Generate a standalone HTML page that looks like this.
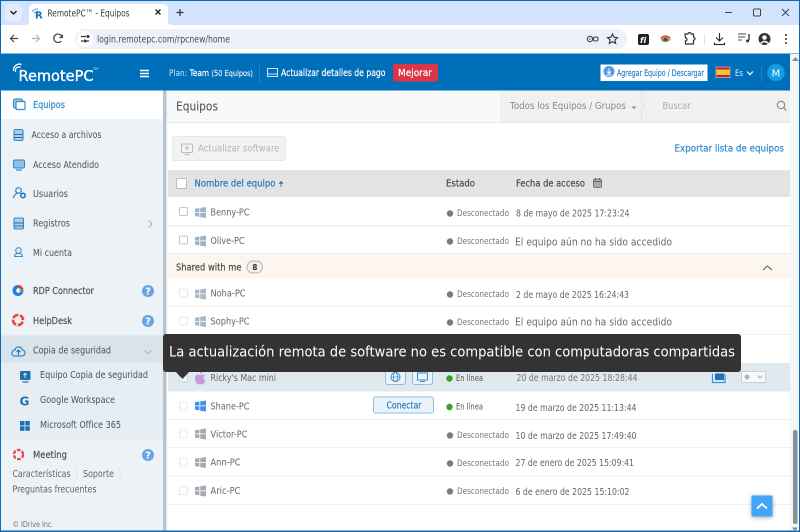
<!DOCTYPE html>
<html lang="es"><head><meta charset="utf-8"><title>RemotePC - Equipos</title>
<style>
html,body{margin:0;padding:0;width:800px;height:532px;overflow:hidden;background:#fff}
svg{display:block}
text{font-family:"DejaVu Sans","Liberation Sans",sans-serif;font-size:9px;fill:#555;white-space:pre}
.nav{font-size:10px;fill:#4b5159}
.navb{font-size:10px;fill:#4b5159;stroke:#4b5159;stroke-width:.2}
.cell{font-size:10px;fill:#666}
.st{font-size:8.5px;fill:#777}
.w{fill:#fff;stroke:#fff;stroke-width:.2}
.hd{font-size:10px;fill:#4a4a4a;stroke:#4a4a4a;stroke-width:.2}
.lnk{font-size:10px;fill:#1f78bd;stroke:#1f78bd;stroke-width:.2}
</style></head><body>
<svg width="800" height="532" viewBox="0 0 800 532" xmlns="http://www.w3.org/2000/svg">
<defs>
<g id="win"><path d="M0 1.600 4.400 1v4H0zM5.200.9 11 0v5H5.200zM0 5.800h4.400v4L0 9.200zM5.200 5.800H11V11l-5.800-.8z"/></g>
<g id="cb"><rect x=".5" y=".5" width="8" height="8" rx="1.500" fill="#fff" stroke="#c4c4c4"/></g>
<g id="cbl"><rect x=".5" y=".5" width="8" height="8" rx="1.500" fill="#fff" stroke="#e8e8e8"/></g>
<g id="q"><circle cx="6" cy="6" r="6" fill="#6aa5e3"/><text x="6" y="9.500" text-anchor="middle" style="font-size:10px;font-weight:700;fill:#fff">?</text></g>
<filter id="sh" x="-30%" y="-30%" width="160%" height="170%"><feDropShadow dx="0" dy="1" stdDeviation="2" flood-color="#000" flood-opacity=".35"/></filter>
</defs>

<!-- Chrome frame -->
<rect width="800" height="532" fill="#fff"/>
<rect x="0" y="0" width="800" height="25" fill="#d3e3fd"/>
<rect x="5" y="4" width="17" height="18" rx="5" fill="#e4ecfb"/>
<path d="M10.500 11l3 3 3-3" fill="none" stroke="#222" stroke-width="1.500"/>
<path d="M25 25q3 0 4-3V9q0-5 5-5h129q5 0 5 5v13q1 3 4 3z" fill="#fff"/>
<path d="M32 12a6 6 0 0 1 6-3M34.500 13.500a3 3 0 0 1 3-2" fill="none" stroke="#59b4e8" stroke-width="1.200"/>
<text x="35" y="18.500" style="font-size:10px;font-weight:700;fill:#1a6fb3">R</text>
<text x="47.500" y="16.500" textLength="82" lengthAdjust="spacingAndGlyphs" style="font-size:9.500px;fill:#3b3b3b">RemotePC™ - Equipos</text>
<path d="M155.500 9.500l5 5m0-5l-5 5" stroke="#222" stroke-width="1.300" fill="none"/>
<path d="M176.500 12.500h7m-3.500-3.500v7" stroke="#333" stroke-width="1.200" fill="none"/>
<path d="M725 12.500h7" stroke="#444" stroke-width="1"/>
<rect x="753.500" y="9" width="7" height="7" rx="1" fill="none" stroke="#444"/>
<path d="M782 9l7 7m0-7l-7 7" stroke="#444" stroke-width="1" fill="none"/>

<rect x="0" y="25" width="800" height="28" fill="#fff"/>
<path d="M18 38.500h-7m3-3.500-3.500 3.500 3.500 3.500" fill="none" stroke="#444" stroke-width="1.200"/>
<path d="M32 38.500h7m-3-3.500 3.500 3.500-3.500 3.500" fill="none" stroke="#b5b5b5" stroke-width="1.200"/>
<path d="M62 37a4.200 4.200 0 1 0-.8 4M62.300 34.500V37.500h-3" fill="none" stroke="#444" stroke-width="1.200"/>
<rect x="75" y="29" width="552" height="20" rx="10" fill="#edf2fa"/>
<circle cx="85" cy="39" r="8" fill="#fff"/>
<path d="M81 36.500h5M81 41h2M86 41h3" stroke="#333" stroke-width="1.200"/><circle cx="88" cy="36.500" r="1.500" fill="#333"/><circle cx="85" cy="41" r="1.500" fill="#333"/>
<text x="97" y="42.500" textLength="133" lengthAdjust="spacingAndGlyphs" style="font-size:10px;fill:#4a4a4a">login.remotepc.com/rpcnew/home</text>
<circle cx="590" cy="39" r="2.700" fill="none" stroke="#444" stroke-width="1.100"/><circle cx="590" cy="39" r=".8" fill="#444"/><rect x="593.500" y="37" width="4.500" height="4" rx="1.500" fill="none" stroke="#444" stroke-width="1.100"/>
<path d="M612.500 34l1.500 3.200 3.500.4-2.600 2.300.8 3.500-3.200-1.800-3.200 1.800.8-3.500-2.600-2.300 3.500-.4z" fill="none" stroke="#333" stroke-width="1.100"/>
<rect x="638" y="34" width="11" height="11" rx="2" fill="#222"/><text x="640" y="43" style="font-size:8px;font-style:italic;font-weight:700;fill:#fff">fi</text>
<ellipse cx="665.500" cy="39" rx="5" ry="3" fill="#e5a01f"/><path d="M661 38q4.500-4 9 0" fill="none" stroke="#d83a3a" stroke-width="1.300"/><ellipse cx="665.500" cy="40" rx="3" ry="1.800" fill="#2b8c56"/><circle cx="665.500" cy="39" r="1.500" fill="#3240b8"/>
<path d="M685 34h3a1.500 1.500 0 0 1 3 0h2.500v3.200a1.500 1.500 0 0 1 0 3v3.800H685.500v-3a1.500 1.500 0 0 0 0-3z" fill="none" stroke="#333" stroke-width="1.200"/>
<path d="M704.500 34v11" stroke="#d5e3f5"/>
<path d="M719.500 33v8m-3.500-3.500 3.500 3.500 3.500-3.500M714.500 42.500v2h10v-2" fill="none" stroke="#333" stroke-width="1.200"/>
<path d="M738 34h8M738 37h7M738 40h4" stroke="#444" stroke-width="1.100"/><path d="M749 34v6.500" stroke="#333" stroke-width="1.300"/><circle cx="747.500" cy="41" r="1.500" fill="#333"/>
<circle cx="764.500" cy="39" r="6" fill="#333"/><circle cx="764.500" cy="37.500" r="2.300" fill="#fff"/><path d="M760.500 43.500q4-4 8 0" fill="none" stroke="#fff" stroke-width="1.300"/>
<circle cx="786" cy="35" r="1" fill="#333"/><circle cx="786" cy="39" r="1" fill="#333"/><circle cx="786" cy="43" r="1" fill="#333"/>
<rect x="0" y="53" width="800" height="1" fill="#7fb3dc"/>

<!-- App header -->
<rect x="0" y="54" width="790" height="36.500" fill="#006fba"/>
<path d="M13.500 71a6 6 0 0 1 8-6.500M15.700 72a3.500 3.500 0 0 1 5-4.500" fill="none" stroke="#fff" stroke-width="1.300"/>
<text x="18.500" y="81" textLength="75" lengthAdjust="spacingAndGlyphs" style="font-size:15.500px;fill:#fff;stroke:#fff;stroke-width:.35">RemotePC</text>
<text x="93" y="70" style="font-size:3.500px;fill:#cfe4f5">TM</text>
<path d="M140 70.500h9M140 73.500h9M140 76.500h9" stroke="#fff" stroke-width="1.500"/>
<text x="169" y="76" textLength="84" lengthAdjust="spacingAndGlyphs" style="font-size:9px;fill:#fff"><tspan fill="#d4e6f6">Plan:</tspan> <tspan stroke="#fff" stroke-width=".2">Team</tspan> <tspan font-size="8" fill="#e8f2fb" stroke="#e8f2fb" stroke-width=".15">(50 Equipos)</tspan></text>
<path d="M259.500 63v21" stroke="#1c82c9"/>
<rect x="267.500" y="68.500" width="10" height="8" fill="none" stroke="#d4e6f6"/><path d="M268 74h9" stroke="#d4e6f6" stroke-width="1"/>
<text class="w" x="281" y="76" textLength="104.500" lengthAdjust="spacingAndGlyphs" style="font-size:9.500px">Actualizar detalles de pago</text>
<rect x="393" y="64" width="45" height="17.500" rx="1.500" fill="#dc3545"/>
<text class="w" x="398" y="76" textLength="34" lengthAdjust="spacingAndGlyphs" style="font-size:9.500px">Mejorar</text>
<rect x="600.500" y="64.500" width="107" height="16.500" fill="#fff"/>
<circle cx="609" cy="71.500" r="5.500" fill="#4a9be8"/><path d="M609 68.500v5m-2-2 2 2 2-2M606.500 75h5" fill="none" stroke="#fff" stroke-width="1"/>
<text x="617" y="76" textLength="87" lengthAdjust="spacingAndGlyphs" style="font-size:9px;fill:#1f7cc7;stroke:#1f7cc7;stroke-width:.15">Agregar Equipo / Descargar</text>
<rect x="716" y="67" width="14" height="10.500" fill="#c8202c" stroke="#e8ced0" stroke-width=".6"/><rect x="716.500" y="69.500" width="13" height="5.500" fill="#f4c430"/>
<text x="735" y="76" textLength="8" lengthAdjust="spacingAndGlyphs" style="font-size:9px;fill:#e3effa">Es</text>
<path d="M747 71.500l3 3 3-3" fill="none" stroke="#fff" stroke-width="1.200"/>
<path d="M761.500 65v17" stroke="#1c82c9"/>
<circle cx="776" cy="72.500" r="8.700" fill="#159ce0"/>
<text x="776" y="76.500" text-anchor="middle" style="font-size:10px;fill:#fff">M</text>

<!-- Sidebar -->
<rect x="0" y="90.500" width="163" height="441" fill="#edf2f7"/>
<rect x="1" y="90.500" width="162" height="28.500" fill="#fff"/>
<rect x="163" y="90.500" width="3.500" height="441" fill="#b9c3cb"/>
<rect x="13.500" y="99" width="9" height="9" rx="2" fill="#a7d0ee" stroke="#2f8dd0" stroke-width="1.200"/><rect x="16" y="101.500" width="9" height="8" rx="1" fill="#fff" stroke="#2f8dd0" stroke-width="1.200"/>
<text x="33" y="108" textLength="32" lengthAdjust="spacingAndGlyphs" style="font-size:10px;fill:#2e8ccc;stroke:#2e8ccc;stroke-width:.2">Equipos</text>

<rect x="14" y="129.500" width="9" height="11" rx="1.500" fill="#a9cdea" stroke="#2d87c9"/><path d="M14 134.500h9.500M14 137.500h9.500" stroke="#2d6fa8"/>
<text class="nav" x="31.500" y="138" textLength="70" lengthAdjust="spacingAndGlyphs">Acceso a archivos</text>
<rect x="13.500" y="160" width="11" height="8" rx="1.500" fill="#8ec0e6" stroke="#2d87c9"/><path d="M16 170h6" stroke="#2d87c9" stroke-width="1.200"/>
<text class="nav" x="33" y="168" textLength="66" lengthAdjust="spacingAndGlyphs">Acceso Atendido</text>
<circle cx="18.500" cy="190.500" r="2.800" fill="none" stroke="#2d87c9" stroke-width="1.200"/><path d="M13.500 198q1-5 5-5" fill="none" stroke="#2d87c9" stroke-width="1.200"/><circle cx="23" cy="195.500" r="2.200" fill="none" stroke="#1d70b0" stroke-width="1.500"/>
<text class="nav" x="33" y="197" textLength="35" lengthAdjust="spacingAndGlyphs">Usuarios</text>
<rect x="14" y="218" width="9.500" height="11" rx="1.500" fill="#a9cdea" stroke="#2d87c9"/><path d="M14 223h9.500M14 226h9.500" stroke="#2d6fa8"/>
<text class="nav" x="33" y="226.500" textLength="37" lengthAdjust="spacingAndGlyphs">Registros</text>
<path d="M149 220.500l3 3.500-3 3.500" fill="none" stroke="#a8adb2"/>
<circle cx="18.500" cy="250.500" r="2.800" fill="none" stroke="#3d8fd0" stroke-width="1.100"/><path d="M14.500 256.500q0-3 4-3t4 3z" fill="none" stroke="#3d8fd0" stroke-width="1.100"/>
<text class="nav" x="33" y="256" textLength="39" lengthAdjust="spacingAndGlyphs">Mi cuenta</text>

<circle cx="18" cy="290.500" r="5.500" fill="#1d7fe0"/><path d="M18 285a5.500 5.500 0 0 1 5 3l-3 1a2 2 0 0 0-2-1z" fill="#e6453a"/><circle cx="18.500" cy="290.500" r="2.300" fill="#fff"/><path d="M19 290.500h3.500v2" fill="none" stroke="#e67c28" stroke-width="1.200"/>
<text class="navb" x="33" y="294" textLength="61" lengthAdjust="spacingAndGlyphs">RDP Connector</text>
<use href="#q" x="142" y="285"/>
<circle cx="18" cy="320" r="5" fill="none" stroke="#e2483d" stroke-width="2.600"/><circle cx="18" cy="320" r="5" fill="none" stroke="#f4d3cf" stroke-width="2.600" stroke-dasharray="2 5.850"/>
<text class="navb" x="33" y="324" textLength="39" lengthAdjust="spacingAndGlyphs">HelpDesk</text>
<use href="#q" x="142" y="315"/>

<rect x="1" y="335.500" width="162" height="27.500" fill="#d9e3ea"/>
<rect x="1" y="363" width="162" height="77" fill="#e7eef3"/>
<path d="M15 356q-3.500 0-3-3t3-3q1-3.500 4-3 3 .5 3.500 3 2.500.5 2.500 3t-3 3z" fill="none" stroke="#2d87c9" stroke-width="1.200"/><path d="M18.500 355v-5m-2 2 2-2 2 2" fill="none" stroke="#1d70b0" stroke-width="1.100"/>
<text class="nav" x="33" y="353.500" textLength="78" lengthAdjust="spacingAndGlyphs">Copia de seguridad</text>
<path d="M144.500 350.500l3.500 3 3.500-3" fill="none" stroke="#aab3ba"/>
<rect x="20" y="371" width="10.500" height="9" rx="1" fill="#1d70b0"/><path d="M22.500 382h6" stroke="#1d70b0" stroke-width="1.200"/><path d="M25 378v-4.500m-1.700 1.500 1.700-1.700 1.700 1.700" stroke="#fff" fill="none" stroke-width=".8"/>
<text class="nav" x="40" y="378" textLength="108" lengthAdjust="spacingAndGlyphs">Equipo Copia de seguridad</text>
<text x="19.500" y="405.500" style="font-size:12px;font-weight:700;fill:#1d70b0">G</text>
<text class="nav" x="40" y="403" textLength="75" lengthAdjust="spacingAndGlyphs">Google Workspace</text>
<g fill="#1d70b0"><rect x="20" y="421" width="4.500" height="4.500"/><rect x="25.300" y="421" width="4.500" height="4.500"/><rect x="20" y="426.300" width="4.500" height="4.500"/><rect x="25.300" y="426.300" width="4.500" height="4.500"/></g>
<text class="nav" x="40" y="428" textLength="81" lengthAdjust="spacingAndGlyphs">Microsoft Office 365</text>
<circle cx="18.500" cy="454.500" r="4.600" fill="none" stroke="#e2483d" stroke-width="2.200" stroke-dasharray="3.500 1.500"/>
<text class="navb" x="33" y="458" textLength="34" lengthAdjust="spacingAndGlyphs">Meeting</text>
<use href="#q" x="142" y="449"/>
<text x="12.500" y="477" textLength="58" lengthAdjust="spacingAndGlyphs" style="font-size:9.500px;fill:#5f6469">Características</text>
<path d="M76.500 467v13M120 467v13" stroke="#dfe4e8"/>
<text x="83" y="477" textLength="31" lengthAdjust="spacingAndGlyphs" style="font-size:9.500px;fill:#5f6469">Soporte</text>
<text x="12.500" y="492.500" textLength="84" lengthAdjust="spacingAndGlyphs" style="font-size:9.500px;fill:#5f6469">Preguntas frecuentes</text>
<text x="12.500" y="527" textLength="41" lengthAdjust="spacingAndGlyphs" style="font-size:8px;fill:#70757a">© IDrive Inc.</text>

<!-- Main top bar -->
<rect x="166.500" y="90.500" width="623.500" height="32" fill="#f8f9f9"/>
<rect x="500" y="90.500" width="290" height="32" fill="#f1f1f1"/>
<rect x="166.500" y="122" width="623.500" height="1" fill="#e6e6e6"/>
<text x="176" y="110.500" textLength="42" lengthAdjust="spacingAndGlyphs" style="font-size:12px;fill:#4b4f54">Equipos</text>
<text x="510" y="109" textLength="116" lengthAdjust="spacingAndGlyphs" style="font-size:10px;fill:#888">Todos los Equipos / Grupos</text>
<path d="M631.500 106.500h5l-2.500 2.500z" fill="#888"/>
<path d="M641.500 91v11l3 4-3 4v12" fill="none" stroke="#e2e2e2"/>
<text x="662.500" y="109" textLength="28" lengthAdjust="spacingAndGlyphs" style="font-size:10px;fill:#aaa">Buscar</text>
<circle cx="781" cy="105" r="3.700" fill="none" stroke="#888" stroke-width="1.100"/><path d="M783.700 107.700l2.800 2.800" stroke="#888" stroke-width="1.200"/>

<!-- Actions -->
<rect x="172.500" y="136.500" width="113" height="24" rx="2" fill="#f0f2f3" stroke="#e5e8ea"/>
<rect x="181.500" y="144" width="11" height="8.500" rx="1" fill="none" stroke="#b9bdc0" stroke-width="1"/><circle cx="187" cy="148" r="1.500" fill="#b9bdc0"/><path d="M184.500 154.500h5" stroke="#b9bdc0" stroke-width="1.300"/>
<text x="198" y="151.500" textLength="81.500" lengthAdjust="spacingAndGlyphs" style="font-size:10px;fill:#b4b8bb">Actualizar software</text>
<text x="674.500" y="151.500" textLength="109.500" lengthAdjust="spacingAndGlyphs" style="font-size:10px;fill:#2b8ac9;stroke:#2b8ac9;stroke-width:.2">Exportar lista de equipos</text>

<!-- Table header -->
<rect x="168" y="170" width="622" height="27" fill="#e3e3e3"/>
<rect x="176.500" y="178.500" width="10" height="10" rx="1" fill="#fff" stroke="#bcbcbc"/>
<text class="lnk" x="194.500" y="186.500" textLength="81" lengthAdjust="spacingAndGlyphs">Nombre del equipo</text>
<path d="M281 187v-5m-2 1.800 2-2.300 2 2.300" fill="#1f78bd" stroke="#1f78bd" stroke-width=".8"/>
<text class="hd" x="446" y="186.500" textLength="29" lengthAdjust="spacingAndGlyphs">Estado</text>
<text class="hd" x="516" y="186.500" textLength="69" lengthAdjust="spacingAndGlyphs">Fecha de acceso</text>
<rect x="593.500" y="179" width="8" height="8.500" rx="1.500" fill="#aaa" stroke="#777"/><path d="M593.500 181.500h8M595.500 178v2M599.500 178v2" stroke="#666"/>

<!-- Rows -->
<g fill="#efefef"><rect x="168" y="225" width="622" height="1.500"/><rect x="168" y="253" width="622" height="1"/><rect x="168" y="306" width="622" height="1"/><rect x="168" y="334" width="622" height="1"/><rect x="168" y="419" width="622" height="1"/><rect x="168" y="447" width="622" height="1"/><rect x="168" y="475.500" width="622" height="1"/><rect x="168" y="504" width="622" height="1"/></g>

<use href="#cb" x="179" y="207"/><use href="#win" x="195" y="207" fill="#9fb3c6"/>
<text class="cell" x="210.500" y="215.500" textLength="39" lengthAdjust="spacingAndGlyphs">Benny-PC</text>
<circle cx="450" cy="213.500" r="3.200" fill="#7b7b7b"/>
<text class="st" x="457" y="216" textLength="52" lengthAdjust="spacingAndGlyphs">Desconectado</text>
<text class="cell" x="516" y="216.500" textLength="113.500" lengthAdjust="spacingAndGlyphs">8 de mayo de 2025 17:23:24</text>

<use href="#cb" x="179" y="235.500"/><use href="#win" x="195" y="235.500" fill="#9fb3c6"/>
<text class="cell" x="210.500" y="244" textLength="34" lengthAdjust="spacingAndGlyphs">Olive-PC</text>
<circle cx="450" cy="241.500" r="3.200" fill="#7b7b7b"/>
<text class="st" x="457" y="244" textLength="52" lengthAdjust="spacingAndGlyphs">Desconectado</text>
<text x="515" y="245.500" textLength="157" lengthAdjust="spacingAndGlyphs" style="font-size:11px;fill:#6a6a6a">El equipo aún no ha sido accedido</text>

<rect x="168" y="254" width="622" height="24.500" fill="#fdf6ee"/>
<text class="hd" x="176" y="270.500" textLength="65.500" lengthAdjust="spacingAndGlyphs">Shared with me</text>
<rect x="247" y="261" width="15.500" height="12" rx="6" fill="#f0f0ee" stroke="#b5b5b5"/>
<text x="254.800" y="270" text-anchor="middle" style="font-size:7.500px;font-weight:700;fill:#333">8</text>
<path d="M763 270l4.500-4 4.500 4" fill="none" stroke="#555" stroke-width="1"/>

<use href="#cbl" x="179" y="288.500"/><use href="#win" x="195" y="288.500" fill="#a9b9c8"/>
<text class="cell" x="210.500" y="296.500" textLength="35" lengthAdjust="spacingAndGlyphs">Noha-PC</text>
<circle cx="450" cy="294.500" r="3.200" fill="#7b7b7b"/>
<text class="st" x="457" y="297" textLength="52" lengthAdjust="spacingAndGlyphs">Desconectado</text>
<text class="cell" x="516" y="298" textLength="113" lengthAdjust="spacingAndGlyphs">2 de mayo de 2025 16:24:43</text>

<use href="#cbl" x="179" y="316.500"/><use href="#win" x="195" y="316" fill="#a9b9c8"/>
<text class="cell" x="210.500" y="324.500" textLength="39" lengthAdjust="spacingAndGlyphs">Sophy-PC</text>
<circle cx="450" cy="322.500" r="3.200" fill="#7b7b7b"/>
<text class="st" x="457" y="325" textLength="52" lengthAdjust="spacingAndGlyphs">Desconectado</text>
<text x="515" y="325.500" textLength="157" lengthAdjust="spacingAndGlyphs" style="font-size:11px;fill:#6a6a6a">El equipo aún no ha sido accedido</text>

<!-- Ricky -->
<rect x="168" y="363" width="622" height="28.500" fill="#dfe9ee"/>
<use href="#cb" x="179" y="373.500" opacity=".55"/>
<path d="M201 375q2-1 4 .2-1.500 1-1.500 2.600t2 2.500q-1 3-2.800 4-.8.300-1.700-.1t-1.800 0q-.9.400-1.600.1-2.600-2-2.700-5.800 0-3.300 2.400-3.800 1.200-.3 2.400.300.600.2 1.300 0zM200 374q0-2.500 2.600-3 0 2.500-2.600 3z" fill="#c79ad9"/>
<text class="cell" x="210.500" y="381" textLength="65.500" lengthAdjust="spacingAndGlyphs">Ricky's Mac mini</text>
<rect x="385.500" y="369.500" width="20" height="15" rx="2.500" fill="#eaf3fa" stroke="#8fc0e3"/>
<circle cx="395.500" cy="377" r="4.500" fill="none" stroke="#3d8ccb"/><ellipse cx="395.500" cy="377" rx="2" ry="4.500" fill="none" stroke="#3d8ccb" stroke-width=".7"/><path d="M391 377h9" stroke="#3d8ccb" stroke-width=".7"/>
<rect x="412.500" y="369.500" width="20" height="15" rx="2.500" fill="#eaf3fa" stroke="#8fc0e3"/>
<rect x="417.500" y="373" width="10" height="7" fill="none" stroke="#3d8ccb"/><path d="M420 381.500h5" stroke="#3d8ccb"/>
<circle cx="449.500" cy="378.500" r="3.200" fill="#36a420"/>
<text class="st" x="456" y="381" textLength="27" lengthAdjust="spacingAndGlyphs" style="fill:#555">En línea</text>
<text class="cell" x="516.500" y="381" textLength="121" lengthAdjust="spacingAndGlyphs" style="fill:#777">20 de marzo de 2025 18:28:44</text>
<path d="M712.500 374v8.500h12.500V374" fill="none" stroke="#3d90d0" stroke-width="1.200"/><rect x="715" y="373.500" width="9" height="6.500" fill="#1f72b8"/>
<rect x="741.500" y="371.500" width="24" height="11" rx="1" fill="#fafafa" stroke="#ccc"/>
<circle cx="747" cy="377" r="2.500" fill="#b5b5b5"/><path d="M757.500 375.500l2.500 2.500 2.500-2.500" fill="none" stroke="#aaa"/>

<!-- Shane -->
<use href="#cbl" x="179" y="401.500"/><use href="#win" x="195" y="400.500" fill="#3f93ea"/>
<text class="cell" x="210.500" y="409.500" textLength="39" lengthAdjust="spacingAndGlyphs">Shane-PC</text>
<rect x="373.500" y="397" width="60" height="16" rx="2" fill="#e8f3fb" stroke="#8fc0e3"/>
<text x="386.500" y="408.500" textLength="35" lengthAdjust="spacingAndGlyphs" style="font-size:9.500px;fill:#2c80bf;stroke:#2c80bf;stroke-width:.2">Conectar</text>
<circle cx="449.500" cy="407" r="3.200" fill="#36a420"/>
<text class="st" x="456" y="409.500" textLength="27" lengthAdjust="spacingAndGlyphs" style="fill:#555">En línea</text>
<text class="cell" x="515.500" y="411" textLength="121" lengthAdjust="spacingAndGlyphs">19 de marzo de 2025 11:13:44</text>

<use href="#cbl" x="179" y="429.500"/><use href="#win" x="195" y="428.500" fill="#a5abb0"/>
<text class="cell" x="210.500" y="437.500" textLength="37" lengthAdjust="spacingAndGlyphs">Victor-PC</text>
<circle cx="450" cy="435.500" r="3.200" fill="#7b7b7b"/>
<text class="st" x="457" y="438" textLength="52" lengthAdjust="spacingAndGlyphs">Desconectado</text>
<text class="cell" x="515.500" y="439" textLength="121" lengthAdjust="spacingAndGlyphs">10 de marzo de 2025 17:49:40</text>

<use href="#cbl" x="179" y="457.500"/><use href="#win" x="195" y="457" fill="#a5abb0"/>
<text class="cell" x="210.500" y="465.500" textLength="30" lengthAdjust="spacingAndGlyphs">Ann-PC</text>
<circle cx="450" cy="463.500" r="3.200" fill="#7b7b7b"/>
<text class="st" x="457" y="466" textLength="52" lengthAdjust="spacingAndGlyphs">Desconectado</text>
<text class="cell" x="515.500" y="466" textLength="118.500" lengthAdjust="spacingAndGlyphs">27 de enero de 2025 15:09:41</text>

<use href="#cbl" x="179" y="486"/><use href="#win" x="195" y="485.500" fill="#a5abb0"/>
<text class="cell" x="210.500" y="494" textLength="30" lengthAdjust="spacingAndGlyphs">Aric-PC</text>
<circle cx="450" cy="491.500" r="3.200" fill="#7b7b7b"/>
<text class="st" x="457" y="494" textLength="52" lengthAdjust="spacingAndGlyphs">Desconectado</text>
<text class="cell" x="515.500" y="495" textLength="114" lengthAdjust="spacingAndGlyphs">6 de enero de 2025 15:10:02</text>

<!-- Tooltip -->
<path d="M175 371h15l-7.500 8z" fill="#333"/>
<rect x="163" y="334" width="578" height="38" rx="3" fill="#333"/>
<text x="169" y="356.500" textLength="566" lengthAdjust="spacingAndGlyphs" style="font-size:14.500px;fill:#fff">La actualización remota de software no es compatible con computadoras compartidas</text>

<!-- Scrollbar -->
<rect x="790" y="54" width="9" height="478" fill="#f5f6f6"/>
<path d="M792 61l3.500-4 3.500 4z" fill="#8a8a8a"/>
<rect x="793" y="430" width="4.500" height="94" rx="2" fill="#8a8f92"/>
<path d="M792 527.500h6l-3 3.500z" fill="#8a8a8a"/>

<!-- Up button -->
<rect x="751.500" y="495.500" width="21" height="21" rx="1" fill="#42a5f5" filter="url(#sh)"/>
<path d="M757 508.500l5-4.500 5 4.500" fill="none" stroke="#fff" stroke-width="1.800"/>

<!-- Window border -->
<rect x="0" y="0" width="800" height="1" fill="#0a6cb8"/>
<rect x="0" y="530.500" width="800" height="1.500" fill="#0a6cb8"/>
<rect x="0" y="0" width="1" height="532" fill="#0a6cb8"/>
<rect x="799" y="0" width="1" height="532" fill="#0a6cb8"/>
</svg>
</body></html>
